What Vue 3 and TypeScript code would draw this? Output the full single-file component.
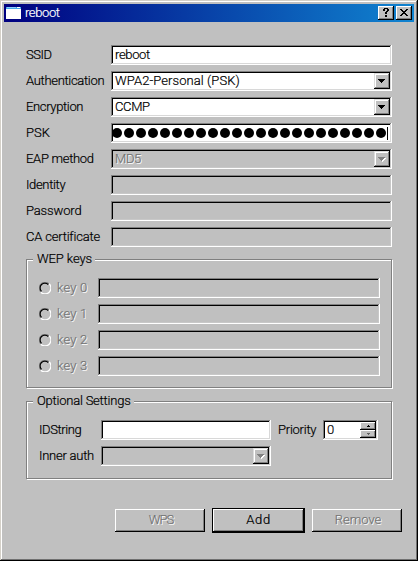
<script setup lang="ts">
interface Row {
  label: string
  value?: string
  combo?: boolean
  disabled?: boolean
  secret?: boolean
  spacing: string
}

const rows: Row[] = [
  { label: 'SSID', value: 'reboot', spacing: 't-ssid' },
  { label: 'Authentication', value: 'WPA2-Personal (PSK)', combo: true, spacing: 't-auth' },
  { label: 'Encryption', value: 'CCMP', combo: true, spacing: 't-enc' },
  { label: 'PSK', secret: true, spacing: 't-psk' },
  { label: 'EAP method', value: 'MD5', combo: true, disabled: true, spacing: 't-eap' },
  { label: 'Identity', disabled: true, spacing: 't-ident' },
  { label: 'Password', disabled: true, spacing: 't-pass' },
  { label: 'CA certificate', disabled: true, spacing: 't-ca' },
]
const wepKeys: string[] = ['key 0', 'key 1', 'key 2', 'key 3']
const secretLength = 23
</script>

<template>
  <div class="window">
    <header class="titlebar">
      <svg class="app-icon" width="16" height="14" viewBox="0 0 16 14" shape-rendering="crispEdges">
        <rect x="0" y="1" width="15" height="12" fill="#fff" />
        <rect x="0" y="1" width="15" height="2" fill="#48a8e8" />
        <rect x="1" y="1" width="9" height="1" fill="#90d0ff" />
        <rect x="11" y="1" width="3" height="1" fill="#fff" />
      </svg>
      <span class="title">reboot</span>
      <div class="caption-btn">
        <svg width="12" height="10" viewBox="0 0 12 10" shape-rendering="crispEdges">
          <path d="M4 0h4v1h-4zM3 1h2v2h-2zM7 1h2v2h-2zM6 3h2v1h-2zM5 4h2v2h-2zM5 7h2v2h-2z" />
        </svg>
      </div>
      <div class="caption-btn close">
        <svg width="12" height="10" viewBox="0 0 12 10" shape-rendering="crispEdges">
          <path d="M2 1h2v1h-2zM8 1h2v1h-2zM3 2h2v1h-2zM7 2h2v1h-2zM4 3h4v1h-4zM5 4h2v1h-2zM4 5h4v1h-4zM3 6h2v1h-2zM7 6h2v1h-2zM2 7h2v1h-2zM8 7h2v1h-2z" />
        </svg>
      </div>
    </header>

    <main class="content">
      <div v-for="row in rows" :key="row.label" class="row">
        <span class="label"><span :class="row.spacing">{{ row.label }}</span></span>
        <div class="field" :class="{ off: row.disabled }">
          <div v-if="row.secret" class="dots">
            <i v-for="n in secretLength" :key="n" class="dot"></i>
            <i class="caret"></i>
          </div>
          <span v-else class="value" :class="{ wide: row.label === 'Authentication' }">{{ row.value }}</span>
          <div v-if="row.combo" class="drop">
            <svg width="9" height="6" viewBox="0 0 9 6" shape-rendering="crispEdges">
              <path v-if="row.disabled" class="arrow-hi" d="M2 1h7v1h-1v1h-1v1h-1v1h-1v-1h-1v-1h-1v-1h-1z" />
              <path :class="row.disabled ? 'arrow-off' : 'arrow'" d="M1 0h7v1h-1v1h-1v1h-1v1h-1v-1h-1v-1h-1v-1h-1z" />
            </svg>
          </div>
        </div>
      </div>

      <section class="group wep">
        <span class="legend"><span class="t-wep">WEP keys</span></span>
        <div v-for="k in wepKeys" :key="k" class="key-row">
          <svg class="radio" width="12" height="12" viewBox="0 0 12 12" fill="none">
            <path d="M1.8 10.2A5.5 5.5 0 0 1 10.2 1.8" stroke="#808080" />
            <path d="M10.2 1.8A5.5 5.5 0 0 1 1.8 10.2" stroke="#fff" stroke-width="1.3" />
            <path d="M2.5 9.3A4.6 4.6 0 0 1 9.3 2.5" stroke="#000" stroke-width="1.2" />
          </svg>
          <span class="key-label">{{ k }}</span>
          <div class="field off"></div>
        </div>
      </section>

      <section class="group optional">
        <span class="legend"><span class="t-opt">Optional Settings</span></span>
        <div class="opt-row">
          <span class="opt-label t-id">IDString</span>
          <div class="field opt-field"></div>
          <span class="prio-label t-prio">Priority</span>
          <div class="field spin">
            <span class="value">0</span>
            <div class="spin-buttons">
              <div class="spin-btn">
                <svg width="3" height="2" viewBox="0 0 3 2" shape-rendering="crispEdges"><path d="M1 0h1v1h1v1h-3v-1h1z" /></svg>
              </div>
              <div class="spin-btn">
                <svg width="3" height="2" viewBox="0 0 3 2" shape-rendering="crispEdges"><path fill="#606060" d="M0 0h3v1h-1v1h-1v-1h-1z" /></svg>
              </div>
            </div>
          </div>
        </div>
        <div class="opt-row">
          <span class="opt-label t-inner">Inner auth</span>
          <div class="field off opt-field">
            <div class="drop">
              <svg width="9" height="6" viewBox="0 0 9 6" shape-rendering="crispEdges">
                <path class="arrow-hi" d="M2 1h7v1h-1v1h-1v1h-1v1h-1v-1h-1v-1h-1v-1h-1z" />
                <path class="arrow-off" d="M1 0h7v1h-1v1h-1v1h-1v1h-1v-1h-1v-1h-1v-1h-1z" />
              </svg>
            </div>
          </div>
        </div>
      </section>

      <footer class="actions">
        <div class="btn disabled"><span class="t-wps">WPS</span></div>
        <div class="default-frame"><div class="btn"><span class="t-add">Add</span></div></div>
        <div class="btn disabled"><span class="t-remove">Remove</span></div>
      </footer>
    </main>
  </div>
</template>

<style>
body {
  background: #c0c0c0;
  overflow: hidden;
}
</style>

<style scoped>
.window {
  box-sizing: border-box;
  width: 418px;
  height: 561px;
  padding: 4px;
  background: #c0c0c0;
  box-shadow: inset -1px -1px #000, inset 1px 1px #d4d0c8, inset -2px -2px #707070, inset 2px 2px #fff;
  font: 300 13px/16px Roboto, "Liberation Sans", sans-serif;
  -webkit-text-stroke: 0.2px;
  color: #000;
  white-space: pre;
}
.titlebar {
  display: flex;
  align-items: center;
  height: 18px;
  padding: 0 2px;
  background: linear-gradient(90deg, #000080, #1084d0);
}
.title {
  flex: 1;
  margin-left: 3px;
  color: #fff;
  letter-spacing: -0.4px;
}
.caption-btn {
  box-sizing: border-box;
  width: 16px;
  height: 14px;
  padding: 2px;
  background: #c0c0c0;
  box-shadow: inset -1px -1px #000, inset 1px 1px #fff, inset -2px -2px #808080;
}
.caption-btn svg { display: block; }
.close { margin-left: 2px; }
.content { padding: 23px 22px 0; }
.row {
  display: flex;
  height: 20px;
  margin-bottom: 6px;
}
.label {
  width: 85px;
  line-height: 20px;
}
.t-ssid { letter-spacing: -0.5px; }
.t-auth { letter-spacing: -0.32px; }
.t-enc { letter-spacing: -0.35px; }
.t-eap { letter-spacing: -0.3px; }
.t-ident { letter-spacing: -0.35px; }
.t-pass { letter-spacing: -0.15px; }
.t-ca { letter-spacing: -0.2px; }
.t-wep { letter-spacing: -0.1px; }
.t-opt { letter-spacing: -0.22px; }
.t-id { letter-spacing: -0.4px; }
.t-inner { letter-spacing: -0.25px; }
.t-prio { letter-spacing: -0.25px; }
.t-wps { letter-spacing: -0.9px; }
.t-add { letter-spacing: 0.7px; }
.field {
  box-sizing: border-box;
  display: flex;
  flex: 1;
  height: 20px;
  padding: 2px;
  background: #fff;
  box-shadow: inset -1px -1px #fff, inset 1px 1px #808080, inset -2px -2px #d8d8d8, inset 2px 2px #000;
}
.row .field { flex: 0 0 281px; }
.off {
  background: #c0c0c0;
  box-shadow: inset -1px -1px #fff, inset 1px 1px #808080, inset -2px -2px #c8c8c8, inset 2px 2px #000;
}
.value {
  flex: 1;
  padding-left: 2px;
  line-height: 16px;
  letter-spacing: -0.35px;
}
.value.wide { letter-spacing: 0.08px; }
.off .value, .key-label, .disabled {
  color: #747474;
  text-shadow: 1px 1px #fff;
}
.drop {
  box-sizing: border-box;
  width: 16px;
  height: 16px;
  padding: 6px 3px;
  background: #c0c0c0;
  box-shadow: inset -1px -1px #000, inset 1px 1px #dcdcdc, inset -2px -2px #808080, inset 2px 2px #fff;
}
.field > .drop { margin-left: auto; }
.drop svg { display: block; }
.arrow-hi { fill: #fff; }
.arrow-off { fill: #808080; }
.dots {
  display: flex;
  align-items: center;
  gap: 2px;
  overflow: hidden;
  margin-left: -1px;
}
.dot {
  flex: none;
  width: 10px;
  height: 10px;
  border-radius: 50%;
  background: #000;
}
.caret {
  width: 1px;
  height: 13px;
  margin-left: -1px;
  background: #000;
}
.group {
  box-sizing: border-box;
  width: 366px;
  border: 1px solid #808080;
  box-shadow: 1px 1px #fff, inset 1px 1px #fff;
}
.legend {
  display: block;
  width: 62px;
  height: 16px;
  margin: -9px 0 0 6px;
  padding-left: 4px;
  box-sizing: border-box;
  background: #c0c0c0;
}
.wep { height: 129px; margin-top: 12px; }
.key-row {
  display: flex;
  align-items: center;
  height: 20px;
  margin: 0 11px 6px 12px;
}
.legend + .key-row { margin-top: 11px; }
.radio { flex: none; }
.key-label {
  width: 47px;
  padding-left: 6px;
  box-sizing: border-box;
  letter-spacing: 0.2px;
}
.optional { height: 78px; margin-top: 13px; }
.optional .legend { width: 101px; }
.opt-row {
  display: flex;
  height: 20px;
  margin: 0 12px 6px;
  line-height: 20px;
}
.legend + .opt-row { margin-top: 11px; }
.opt-label { width: 62px; }
.opt-field { flex: 0 0 170px; }
.prio-label { width: 45px; margin-left: 7px; }
.field.spin { flex: 0 0 55px; }
.spin-buttons { width: 16px; }
.spin-btn {
  box-sizing: border-box;
  display: flex;
  align-items: center;
  justify-content: center;
  height: 8px;
  background: #c0c0c0;
  box-shadow: inset -1px -1px #000, inset 1px 1px #fff, inset -2px -2px #808080;
}
.actions {
  display: flex;
  align-items: center;
  gap: 7px;
  width: 287px;
  margin: 29px 0 0 89px;
}
.btn {
  box-sizing: border-box;
  flex: none;
  width: 90px;
  height: 23px;
  line-height: 22px;
  text-align: center;
  box-shadow: inset -1px -1px #000, inset 1px 1px #fff, inset -2px -2px #808080;
}
.btn.disabled { padding-left: 2px; }
.default-frame {
  padding: 1px;
  background: #000;
}
.default-frame .btn { width: 91px; background: #c0c0c0; }
</style>
